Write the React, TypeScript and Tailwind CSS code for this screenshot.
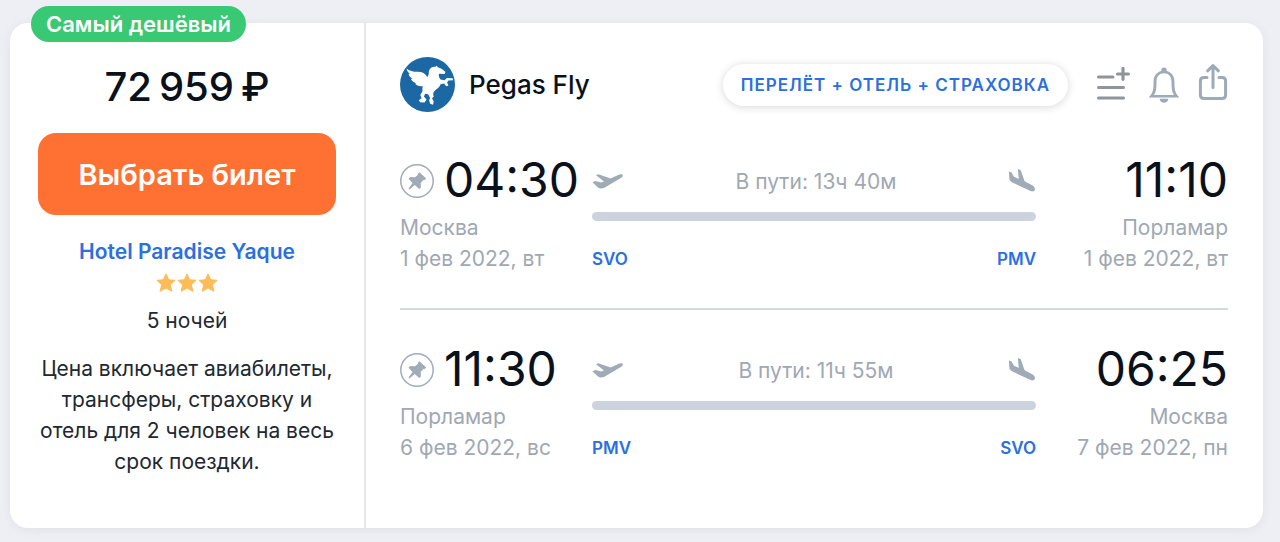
import React from "react";

type Stop = { time: string; city: string; date: string; code: string };
type Flight = { from: Stop; to: Stop; duration: string };

const flights: Flight[] = [
  {
    from: { time: "04:30", city: "Москва", date: "1 фев 2022, вт", code: "SVO" },
    to: { time: "11:10", city: "Порламар", date: "1 фев 2022, вт", code: "PMV" },
    duration: "13ч 40м",
  },
  {
    from: { time: "11:30", city: "Порламар", date: "6 фев 2022, вс", code: "PMV" },
    to: { time: "06:25", city: "Москва", date: "7 фев 2022, пн", code: "SVO" },
    duration: "11ч 55м",
  },
];

function PegasusLogo() {
  return (
    <svg viewBox="0 0 168 168" className="size-[55px] shrink-0" aria-hidden="true">
      <circle cx="84" cy="84" r="84" fill="#1b68a5" />
      <path
        fill="#fff"
        d="M20 35C28 43 40 45 54 45C68 45 78 50 83 61C87 58 88 53 88 46C89 36 97 29 108 30L113 27L115 31C124 33 133 39 139 46L136 52L119 51C117 57 120 64 124 69L136 71L143 64L161 65L162 71L148 72L144 78L148 87L141 89L135 81L124 83C121 92 113 97 106 103C100 109 101 115 103 121L98 126L103 136L101 146L92 143L89 132L92 125L86 114L77 112L73 121L81 130L75 139L61 138L58 131L66 126L62 116L69 104C68 98 68 94 70 89C60 91 51 88 46 82L50 80C42 77 36 73 33 67L38 66C31 62 27 57 26 52L30 52C25 47 21 42 20 35Z"
      />
    </svg>
  );
}

function PinIcon() {
  return (
    <svg viewBox="0 0 34 34" className="size-[34px]" aria-hidden="true">
      <circle cx="17" cy="17" r="16.2" fill="none" stroke="#a0acb8" strokeWidth="1.5" />
      <path
        fill="#a0abb8"
        d="M19.5 8.2L26.2 14.4L24.4 16.2L23.4 16L20.7 19L20.9 23.6L19.2 25L14.8 21L9.5 25.6L8.5 24.6L12.6 19L8.5 14.8L10.2 13.1L15 13.2L18 10.8L17.8 9.7Z"
      />
    </svg>
  );
}

function TakeoffIcon() {
  return (
    <svg viewBox="0 0 32 18" className="h-[18px] w-8" aria-hidden="true">
      <path
        fill="#a0abb8"
        d="M.4 10.3L3.4 9L9 10.6L12 9.4L4 3.2L6.4 2.2L18.6 6.4L26.2 3C28 2.2 30.4 2 30.8 3.2C31.2 4.4 29.6 5.8 28 6.4L12.4 15.7C10 16.8 7.6 16.8 6 15.6Z"
      />
    </svg>
  );
}

function LandingIcon() {
  return (
    <svg viewBox="0 0 28 26" className="h-[26px] w-7" aria-hidden="true">
      <path
        fill="#a0abb8"
        d="M.9 3.4L3.4 4.2L6 8.8L10.8 10.8L9.8 1L12.6 2L16.6 13.2L24.2 17.2C26.2 18.4 27.4 20.4 26.8 22C26.2 23.4 24.6 23.8 22.6 23L6 15.2C3 13.8 1.6 12.8 1.4 11Z"
      />
    </svg>
  );
}

function StarIcon() {
  return (
    <svg viewBox="0 0 20 20" className="size-5" aria-hidden="true">
      <path
        fill="#fdbc57"
        stroke="#fdbc57"
        strokeWidth="1"
        strokeLinejoin="round"
        d="M10 .9L12.7 6.8L19.1 7.3L14.3 11.8L15.9 18.3L10 15L4.1 18.3L5.7 11.8L.9 7.3L7.3 6.8Z"
      />
    </svg>
  );
}

function AddToListIcon() {
  return (
    <svg viewBox="0 0 34 36" className="h-9 w-[34px]" fill="none" stroke="#909599" strokeWidth="3" strokeLinecap="round" aria-hidden="true">
      <path d="M2.5 10H17M2.5 20.5H27.5M2.5 31H27.5" />
      <path d="M27 1.5V12.3M21.5 7H32.4" strokeWidth="3.2" />
    </svg>
  );
}

function BellIcon() {
  return (
    <svg viewBox="0 0 32 36" className="h-9 w-8" aria-hidden="true">
      <path
        fillRule="evenodd"
        fill="#9daab9"
        d="M13.3 4V3.2A2.7 2.7 0 0 1 18.7 3.2V4C23.6 5.2 26.4 9.2 26.4 14.4C26.4 22 27 26 31 30V30.6H1V30C5 26 5.6 22 5.6 14.4C5.6 9.2 8.4 5.2 13.3 4ZM16 6.2C11.4 6.2 8.5 9.5 8.5 14.4C8.5 21 8.2 24.5 6 27.9H26C23.8 24.5 23.5 21 23.5 14.4C23.5 9.5 20.6 6.2 16 6.2Z"
      />
      <path d="M11.6 31.8H20.4C20 34.2 18.4 35.8 16 35.8C13.6 35.8 12 34.2 11.6 31.8Z" fill="#9daab9" />
    </svg>
  );
}

function ShareIcon() {
  return (
    <svg viewBox="0 0 30 38" className="h-[38px] w-[30px]" fill="none" stroke="#9daab9" strokeWidth="3" strokeLinecap="round" strokeLinejoin="round" aria-hidden="true">
      <path d="M9 14.5H6Q2.4 14.5 2.4 18.1V32Q2.4 35.6 6 35.6H24Q27.6 35.6 27.6 32V18.1Q27.6 14.5 24 14.5H21" />
      <path d="M15 24.5V2.8M9.6 7.8L15 2.6L20.4 7.8" />
    </svg>
  );
}

function FlightSegment({ from, to, duration }: Flight) {
  return (
    <section className="grid grid-cols-[192px_1fr_192px] text-[21px] leading-[31px] text-[#a0a8b3]">
      <div>
        <div className="flex h-16 items-center gap-2.5">
          <button type="button" aria-label="Закрепить рейс" className="mt-0.5">
            <PinIcon />
          </button>
          <time className="text-5xl text-[#0b111b]">{from.time}</time>
        </div>
        <p>{from.city}</p>
        <p>{from.date}</p>
      </div>
      <div className="flex flex-col">
        <div className="flex h-16 items-center justify-between pt-0.5">
          <TakeoffIcon />
          <span>В пути: {duration}</span>
          <LandingIcon />
        </div>
        <div className="h-[9px] rounded-full bg-[#cdd3de]" />
        <div className="mt-6 flex justify-between text-[17px] leading-[29px] font-semibold text-[#2b6fe0]">
          <abbr className="no-underline">{from.code}</abbr>
          <abbr className="no-underline">{to.code}</abbr>
        </div>
      </div>
      <div className="text-right">
        <time className="flex h-16 items-center justify-end text-5xl text-[#0b111b]">{to.time}</time>
        <p>{to.city}</p>
        <p>{to.date}</p>
      </div>
    </section>
  );
}

export default function App() {
  return (
    <main className="min-h-screen bg-[#eeeff4] pt-[23px] pr-[17px] pb-3.5 pl-2.5 font-['Inter',sans-serif]">
      <article className="relative flex min-h-[505px] rounded-[18px] bg-white shadow-[0_2px_12px_rgba(0,0,0,0.06)]">
        <span className="absolute -top-[17px] left-[21px] rounded-full bg-[#39c873] px-[15px] text-[22px] leading-9 font-semibold text-white">
          Самый дешёвый
        </span>

        <aside className="flex w-[356px] shrink-0 flex-col items-center border-r-2 border-[#e5e7ea] px-7 pt-10 text-center text-[21px] leading-[31px] text-[#222831]">
          <p className="text-[40px] leading-12 font-medium text-[#0b111b]">72&#8239;959&#8239;₽</p>
          <button type="button" className="mt-[22px] h-[82px] w-full rounded-[18px] bg-[#ff7033] text-[29px] font-semibold text-white">
            Выбрать билет
          </button>
          <a href="#hotel" className="mt-[21px] font-semibold text-[#2b6fe0]">
            Hotel Paradise Yaque
          </a>
          <div className="mt-1.5 flex gap-px" role="img" aria-label="3 звезды">
            <StarIcon />
            <StarIcon />
            <StarIcon />
          </div>
          <p className="mt-3">5 ночей</p>
          <p className="mt-[17px] w-[300px]">
            Цена включает авиабилеты, трансферы, страховку и отель для 2 человек на весь срок поездки.
          </p>
        </aside>

        <div className="flex min-w-0 flex-1 flex-col pt-[34px] pr-[35px] pl-[34px]">
          <header className="flex h-[55px] items-center">
            <PegasusLogo />
            <h2 className="ml-3.5 text-[26px] font-medium text-[#0b111b]">Pegas Fly</h2>
            <button
              type="button"
              className="ml-auto h-[42px] rounded-full bg-white px-[18px] pt-0.5 text-[17px] font-semibold tracking-[1px] text-[#2b6fe0] shadow-[0_1px_8px_rgba(0,0,0,0.16)]"
            >
              ПЕРЕЛЁТ + ОТЕЛЬ + СТРАХОВКА
            </button>
            <div className="ml-7 flex items-center gap-[18px]">
              <button type="button" aria-label="Добавить в список">
                <AddToListIcon />
              </button>
              <button type="button" aria-label="Уведомления о цене">
                <BellIcon />
              </button>
              <button type="button" aria-label="Поделиться" className="-mt-1.5">
                <ShareIcon />
              </button>
            </div>
          </header>
          <div className="mt-9">
            <FlightSegment {...flights[0]} />
          </div>
          <div className="mt-[34px] border-t-2 border-[#d4d7dc] pt-[27px]">
            <FlightSegment {...flights[1]} />
          </div>
        </div>
      </article>
    </main>
  );
}
